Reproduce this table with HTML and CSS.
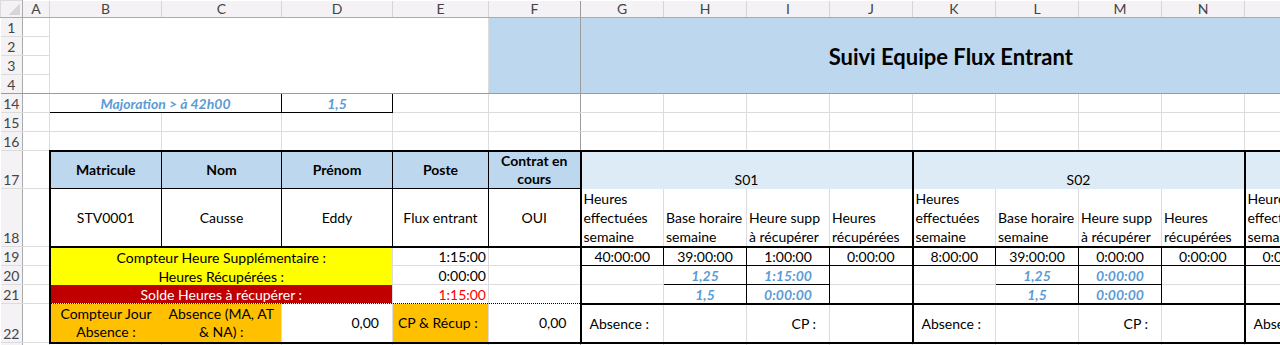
FILE: index.html
```html
<!DOCTYPE html>
<html lang="fr">
<head>
<meta charset="utf-8">
<title>Suivi Equipe Flux Entrant</title>
<link rel="stylesheet" href="styles.css">
</head>
<body>
<table class="sheet">
  <colgroup>
    <col class="w-rh"><col class="w-a"><col class="w-b"><col class="w-c"><col class="w-d"><col class="w-e"><col class="w-f">
    <col class="w-wk"><col class="w-wk"><col class="w-wk"><col class="w-wk"><col class="w-wk"><col class="w-wk"><col class="w-wk"><col class="w-wk"><col class="w-wk">
  </colgroup>
  <tr class="h-head">
    <td class="corner"></td>
    <td class="ch">A</td><td class="ch">B</td><td class="ch">C</td><td class="ch">D</td><td class="ch">E</td><td class="ch fz-r">F</td>
    <td class="ch">G</td><td class="ch">H</td><td class="ch">I</td><td class="ch">J</td><td class="ch">K</td><td class="ch">L</td><td class="ch">M</td><td class="ch">N</td><td class="ch">O</td>
  </tr>
  <tr class="h-row">
    <td class="rh">1</td><td></td>
    <td class="logo-area fz-b" colspan="4" rowspan="4"></td>
    <td class="fill-blue fz-r fz-b" rowspan="4"></td>
    <td class="fill-blue title fz-b" colspan="9" rowspan="4">Suivi Equipe Flux Entrant</td>
  </tr>
  <tr class="h-row"><td class="rh">2</td><td></td></tr>
  <tr class="h-row"><td class="rh">3</td><td></td></tr>
  <tr class="h-row"><td class="rh fz-b">4</td><td class="fz-b"></td></tr>
  <tr class="h-row">
    <td class="rh">14</td><td></td>
    <td class="box ital" colspan="2">Majoration &gt; à 42h00</td>
    <td class="box ital">1,5</td>
    <td></td><td class="fz-r"></td>
    <td></td><td></td><td></td><td></td><td></td><td></td><td></td><td></td><td></td>
  </tr>
  <tr class="h-row">
    <td class="rh">15</td><td></td><td></td><td></td><td></td><td></td><td class="fz-r"></td>
    <td></td><td></td><td></td><td></td><td></td><td></td><td></td><td></td><td></td>
  </tr>
  <tr class="h-row">
    <td class="rh">16</td><td></td><td></td><td></td><td></td><td></td><td class="fz-r"></td>
    <td></td><td></td><td></td><td></td><td></td><td></td><td></td><td></td><td></td>
  </tr>
  <tr class="h-r17">
    <td class="rh">17</td><td></td>
    <td class="hdr L T">Matricule</td>
    <td class="hdr T">Nom</td>
    <td class="hdr T">Prénom</td>
    <td class="hdr T">Poste</td>
    <td class="hdr wrap T R">Contrat en cours</td>
    <td class="week L R T" colspan="4">S01</td>
    <td class="week L R T" colspan="4">S02</td>
    <td class="week L T"></td>
  </tr>
  <tr class="h-r18">
    <td class="rh">18</td><td></td>
    <td class="box val L">STV0001</td>
    <td class="box val">Causse</td>
    <td class="box val">Eddy</td>
    <td class="box val">Flux entrant</td>
    <td class="box val R">OUI</td>
    <td class="lbl L">Heures effectuées semaine</td>
    <td class="lbl">Base horaire semaine</td>
    <td class="lbl">Heure supp à récupérer</td>
    <td class="lbl R">Heures récupérées</td>
    <td class="lbl L">Heures effectuées semaine</td>
    <td class="lbl">Base horaire semaine</td>
    <td class="lbl">Heure supp à récupérer</td>
    <td class="lbl R">Heures récupérées</td>
    <td class="lbl L">Heures effectuées semaine</td>
  </tr>
  <tr class="h-row">
    <td class="rh">19</td><td></td>
    <td class="yellow L T" colspan="3">Compteur Heure Supplémentaire :</td>
    <td class="num T">1:15:00</td>
    <td class="T R"></td>
    <td class="box ctr L T">40:00:00</td>
    <td class="box ctr T">39:00:00</td>
    <td class="box ctr T">1:00:00</td>
    <td class="box ctr T R">0:00:00</td>
    <td class="box ctr L T">8:00:00</td>
    <td class="box ctr T">39:00:00</td>
    <td class="box ctr T">0:00:00</td>
    <td class="box ctr T R">0:00:00</td>
    <td class="box ctr L T">0:00:00</td>
  </tr>
  <tr class="h-row">
    <td class="rh">20</td><td></td>
    <td class="yellow L" colspan="3">Heures Récupérées :</td>
    <td class="num">0:00:00</td>
    <td class="R"></td>
    <td class="L"></td>
    <td class="box ital">1,25</td>
    <td class="box ital">1:15:00</td>
    <td class="R"></td>
    <td class="L"></td>
    <td class="box ital">1,25</td>
    <td class="box ital">0:00:00</td>
    <td class="R"></td>
    <td class="L"></td>
  </tr>
  <tr class="h-row">
    <td class="rh">21</td><td></td>
    <td class="red L dot-b" colspan="3">Solde Heures à récupérer :</td>
    <td class="num red-text dot-b">1:15:00</td>
    <td class="R dot-b"></td>
    <td class="L"></td>
    <td class="box ital">1,5</td>
    <td class="box ital">0:00:00</td>
    <td class="R"></td>
    <td class="L"></td>
    <td class="box ital">1,5</td>
    <td class="box ital">0:00:00</td>
    <td class="R"></td>
    <td class="L"></td>
  </tr>
  <tr class="h-r22">
    <td class="rh">22</td><td></td>
    <td class="orange wrap L B dot-t no-r">Compteur Jour Absence :</td>
    <td class="orange wrap B dot-t no-l">Absence (MA, AT &amp; NA) :</td>
    <td class="num pad-acc mid B dot-t">0,00</td>
    <td class="orange mid pad-l B dot-t">CP &amp; Récup :</td>
    <td class="num pad-acc mid B R dot-t">0,00</td>
    <td class="mid abs L T B">Absence :</td>
    <td class="T B"></td>
    <td class="num pad-acc mid T B">CP :</td>
    <td class="T B R"></td>
    <td class="mid abs L T B">Absence :</td>
    <td class="T B"></td>
    <td class="num pad-acc mid T B">CP :</td>
    <td class="T B R"></td>
    <td class="mid abs L T B">Absence :</td>
  </tr>
  <tr class="h-row">
    <td class="rh">23</td><td></td><td></td><td></td><td></td><td></td><td class="fz-r"></td>
    <td></td><td></td><td></td><td></td><td></td><td></td><td></td><td></td><td></td>
  </tr>
</table>
</body>
</html>
```
FILE: styles.css
```css
html, body {
  margin: 0;
  padding: 0;
  background: #ffffff;
  overflow: hidden;
  width: 1280px;
  height: 345px;
}

.sheet {
  border-collapse: collapse;
  table-layout: fixed;
  width: 1327px;
  font-family: "Lato", "Open Sans", sans-serif;
  font-size: 14px;
  color: #000;
}

.w-rh { width: 22px; }
.w-a { width: 27px; }
.w-b { width: 112px; }
.w-c { width: 120px; }
.w-d { width: 111px; }
.w-e { width: 96px; }
.w-f { width: 92px; }
.w-wk { width: 83px; }

.h-head { height: 17px; }
.h-row { height: 19px; }
.h-r17 { height: 38px; }
.h-r18 { height: 58px; }
.h-r22 { height: 39px; }

.sheet td {
  border: 1px solid #dcdcdc;
  padding: 0 3px;
  line-height: 17px;
  white-space: nowrap;
  overflow: hidden;
  vertical-align: bottom;
}

/* headers */
.sheet .ch {
  background: #f4f2f4;
  color: #444;
  text-align: center;
  vertical-align: middle;
  font-size: 14px;
  line-height: 16px;
  padding: 0;
  border-top: none;
  border-right: 1px solid #d6d4d6;
  border-bottom: 1px solid #ababab;
}
.sheet .corner {
  background-color: #f4f2f4;
  background-image: linear-gradient(to top left, #d6d6d6 50%, transparent 50%);
  background-size: 12px 12px;
  background-position: right 2px bottom 2px;
  background-repeat: no-repeat;
  border-right: 1px solid #ababab;
  border-bottom: 1px solid #ababab;
  padding: 0;
}
.sheet .rh {
  background: #f4f2f4;
  color: #444;
  text-align: center;
  padding: 0;
  border-left: none;
  border-right: 1px solid #ababab;
  border-bottom: 1px solid #dcdcdc;
}

/* freeze lines */
.sheet .fz-r { border-right: 1px solid #9c9c9c; }
.sheet .fz-b { border-bottom: 1px solid #9c9c9c; }

/* title band */
.sheet .logo-area { background: #ffffff; }
.sheet .fill-blue { background: #bdd7ee; }
.sheet .title {
  font-weight: 700;
  font-size: 22px;
  text-align: center;
  vertical-align: middle;
  padding: 2px 7px 0 0;
  border-left: 1px solid #9c9c9c;
  border-right: none;
}

/* generic cell styles */
.sheet .box { border: 1px solid #000; }
.sheet .ital {
  font-style: italic;
  font-weight: 700;
  color: #5b9bd5;
  text-align: center;
}
.sheet .hdr {
  background: #bdd7ee;
  font-weight: 700;
  text-align: center;
  vertical-align: middle;
  border: 1px solid #000;
}
.sheet .wrap {
  white-space: normal;
  line-height: 18px;
}
.sheet .val { text-align: center; vertical-align: middle; }
.sheet .ctr { text-align: center; }
.sheet .num { text-align: right; padding-right: 2px; }
.sheet .pad-acc { padding-right: 13px; }
.sheet .mid { vertical-align: middle; }
.sheet .pad-l { padding-left: 5px; }
.sheet .abs { padding-left: 8px; }

.sheet .week {
  background: #ddebf7;
  text-align: center;
  vertical-align: bottom;
  padding-bottom: 1px;
  border-bottom: none;
}
.sheet .lbl {
  white-space: normal;
  line-height: 19px;
  padding: 0 2px;
  border-top: none;
  vertical-align: bottom;
}

.sheet .yellow {
  background: #ffff00;
  text-align: center;
  border-top: none;
  border-bottom: none;
  border-right: none;
}
.sheet .red {
  background: #c00000;
  color: #ffffff;
  text-align: center;
  border-top: none;
  border-right: none;
}
.sheet .red-text { color: #ff0000; }
.sheet .orange {
  background: #ffc000;
  text-align: center;
  vertical-align: middle;
  border-left: none;
  border-right: none;
}
.sheet .orange.pad-l { text-align: left; }
.sheet .no-r { border-right: none; }
.sheet .no-l { border-left: none; }

.sheet .dot-b { border-bottom: 1px dotted #000; }
.sheet .dot-t { border-top: 1px dotted #000; }

/* thick outline edges */
.sheet .T { border-top: 2px solid #000; }
.sheet .B { border-bottom: 2px solid #000; }
.sheet .L { border-left: 2px solid #000; }
.sheet .R { border-right: 2px solid #000; }
```
